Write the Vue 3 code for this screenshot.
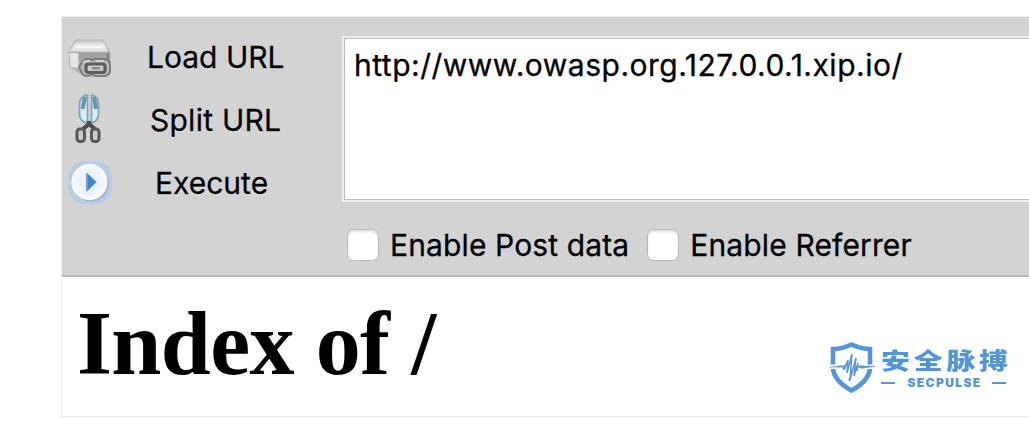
<script setup>
const options = ['Enable Post data', 'Enable Referrer']
</script>

<template>
  <main class="window">
    <section class="toolbar">
      <div class="actions">
        <div class="action load">
          <svg class="icon" width="48" height="48" viewBox="0 0 48 48">
            <defs>
              <linearGradient id="lid" x1="0" y1="0" x2="0" y2="1">
                <stop offset="0" stop-color="#c0c0c0" />
                <stop offset=".45" stop-color="#ececec" />
                <stop offset="1" stop-color="#dedede" />
              </linearGradient>
              <linearGradient id="body" x1="0" y1="0" x2="0" y2="1">
                <stop offset="0" stop-color="#8c8c8c" />
                <stop offset=".5" stop-color="#a2a2a2" />
                <stop offset="1" stop-color="#b8b8b8" />
              </linearGradient>
            </defs>
            <path d="M4 18 10 7h28l7 11v19L40 39H15L5 33Z" fill="url(#body)" stroke="#b0b0b0" />
            <path d="M4 18 11 6h27l6 12Z" fill="url(#lid)" stroke="#b9b9b9" />
            <path d="M11 13h26" stroke="#f5f5f5" stroke-width="2" />
            <path d="M4.500 19h9v15l-8-1Z" fill="#e5e5e5" />
            <path d="M43 19v18" stroke="#858585" stroke-width="3" />
            <path d="M16 30q2-5 8-5l3 1 4-1h8q6 1 6 6v6q-1 5-6 5h-8l-4-1-5 1q-5 0-6-5l-2-4Z" fill="#b8b8b8" stroke="#7c7c7c" stroke-width="2" />
            <rect x="21" y="30" width="19" height="8.500" rx="2.500" fill="#c9c9c9" stroke="#5c5c5c" stroke-width="3.200" />
            <path d="M27 34.200h8" stroke="#8a8a8a" stroke-width="2.400" />
            <path d="M18 29q2-3 7-2M31 27h8" fill="none" stroke="#ddd" stroke-width="1.600" />
          </svg>
          <span>Load URL</span>
        </div>
        <div class="action split">
          <svg class="icon" width="48" height="60" viewBox="0 0 48 60">
            <path d="M22.500 4.500h-3q-5 3-5 9v9q0 6 5 9h3Z" fill="#d9f0f8" stroke="#7ea4b5" stroke-width="1.800" />
            <path d="M26.500 4.500h2q5 3 5 9v9q0 6-5 9h-2Z" fill="#d9f0f8" stroke="#7ea4b5" stroke-width="1.800" />
            <path d="m20 6-2.500 12M29 6l2 12" stroke="#6694a8" stroke-width="4" />
            <path d="M24.500 5v26" stroke="#c5d0d4" stroke-width="2" />
            <path d="M24 30v4M17 39l7-6 7 6" fill="none" stroke="#4c4c4c" stroke-width="4" />
            <rect x="12" y="38" width="7.500" height="12.500" rx="3" fill="#c8c8c8" stroke="#585858" stroke-width="3" />
            <rect x="26.500" y="38" width="7.500" height="12.500" rx="3" fill="#c8c8c8" stroke="#585858" stroke-width="3" />
          </svg>
          <span>Split URL</span>
        </div>
        <div class="action execute">
          <svg class="icon" width="48" height="48" viewBox="0 0 48 48">
            <defs>
              <radialGradient id="disc">
                <stop offset="0" stop-color="#e2effc" />
                <stop offset=".75" stop-color="#edf4fc" />
                <stop offset="1" stop-color="#fff" />
              </radialGradient>
            </defs>
            <rect x="3" y="1" width="44" height="43" rx="17" fill="#b9cce6" />
            <circle cx="26" cy="23.500" r="18" fill="#a3b3c8" />
            <circle cx="24.500" cy="22" r="18" fill="url(#disc)" />
            <path d="M21.500 12.500 31.500 22l-10 10Z" fill="#4384cb" />
            <path d="M22 13.500v17" stroke="#6f9fd6" stroke-width="1.500" />
          </svg>
          <span>Execute</span>
        </div>
      </div>
      <div class="fields">
        <div class="url-box"><span class="url">http://www.owasp.org.127.0.0.1.xip.io/</span></div>
        <div class="options">
          <label v-for="(option, i) in options" :key="option" class="option" :class="{ second: i === 1 }">
            <i class="checkbox"></i><span>{{ option }}</span>
          </label>
        </div>
      </div>
    </section>
    <section class="page">
      <h1>Index of /</h1>
      <div class="brand">
        <svg width="46" height="54" viewBox="0 0 46 54">
          <path d="M22.500 4.500Q13 9 4 9v19Q5 41 22.500 50.500 40 41 41 28V9Q32 9 22.500 4.500Z" fill="#fff" stroke="#5496d5" stroke-width="4.600" />
          <path d="M0 24.500h7v4.500H0ZM38 24.500h8v4.500h-8Z" fill="#fff" />
          <path d="M0 27.200 13 25.600 17 27.500M30 25.500l4 .5 12 .3-13 2-4-1" fill="#5496d5" stroke="#5496d5" stroke-width=".6" />
          <path d="m15 30 4-10-1 13 5-19-2 26 6-22-2 18 4-13-1 8M14 29l2-4M20 41l3-11" fill="none" stroke="#5496d5" stroke-width="1.500" />
        </svg>
        <div class="brand-text">
          <div class="brand-name">安全脉搏</div>
          <div class="brand-sub"><i></i><span>SECPULSE</span><i></i></div>
        </div>
      </div>
    </section>
  </main>
</template>

<style>
body { background: #fff; overflow: hidden; }
</style>

<style scoped>
.window {
  box-sizing: border-box;
  width: 968px;
  height: 401px;
  margin: 16px 0 0 61px;
  border: 1px solid #ececec;
  border-right: 0;
  font-family: Inter, "Liberation Sans", sans-serif;
  font-size: 30px;
  color: #000;
}
.toolbar {
  box-sizing: border-box;
  display: flex;
  height: 260px;
  background: #d3d3d3;
  border-bottom: 2px solid #b5b5b5;
  -webkit-text-stroke: .3px #000;
}
.actions { width: 280px; padding-top: 9px; }
.action {
  display: flex;
  align-items: center;
  height: 63px;
  line-height: 63px;
  text-shadow: 0 1px 1px #eee;
  white-space: nowrap;
}
.icon { flex: none; margin-left: 3px; filter: blur(.6px); }
.action span { margin-left: 34px; }
.split span { margin-left: 37px; letter-spacing: .25px; }
.execute span { margin-left: 42px; }
.fields { flex: 1; padding-top: 19px; }
.url-box {
  box-sizing: border-box;
  height: 166px;
  border: 2px solid #efefef;
  border-right: 0;
  background: #fff;
  box-shadow: inset 1px 1px #bbb, inset 0 -1px #bbb;
  padding: 8px 0 0 10px;
  line-height: 38px;
  letter-spacing: .5px;
  white-space: nowrap;
}
.options { display: flex; padding: 24px 0 0 5px; }
.option { display: flex; align-items: center; line-height: 38px; letter-spacing: .13px; white-space: nowrap; }
.checkbox {
  box-sizing: border-box;
  width: 32px;
  height: 32px;
  margin-right: 11px;
  border: 1px solid #b9b9b9;
  border-radius: 7px;
  background: #fff;
  box-shadow: inset 0 2px 2px #e2e2e2;
}
.second { margin-left: 18px; }
.page { display: flex; height: 139px; }
h1 {
  width: 752px;
  margin: 17px 0 0 15px;
  font: bold 90px/100px "Liberation Serif", serif;
  letter-spacing: -.65px;
  white-space: nowrap;
}
.brand { display: flex; padding-top: 63px; color: #5496d5; }
.brand-text { margin: 5px 0 0 6px; width: 127px; }
.brand-name {
  font: 900 29px/28px "Noto Sans CJK SC", sans-serif;
  letter-spacing: 3.700px;
  transform: scaleY(.8);
  transform-origin: 0 50%;
  white-space: nowrap;
}
.brand-sub {
  display: flex;
  align-items: center;
  justify-content: space-between;
  width: 125px;
  margin-top: 3px;
  font: 900 12px/14px Inter, sans-serif;
}
.brand-sub span { margin-right: -2px; letter-spacing: 1.400px; }
.brand-sub i { width: 14px; height: 2px; background: #5496d5; }
</style>
